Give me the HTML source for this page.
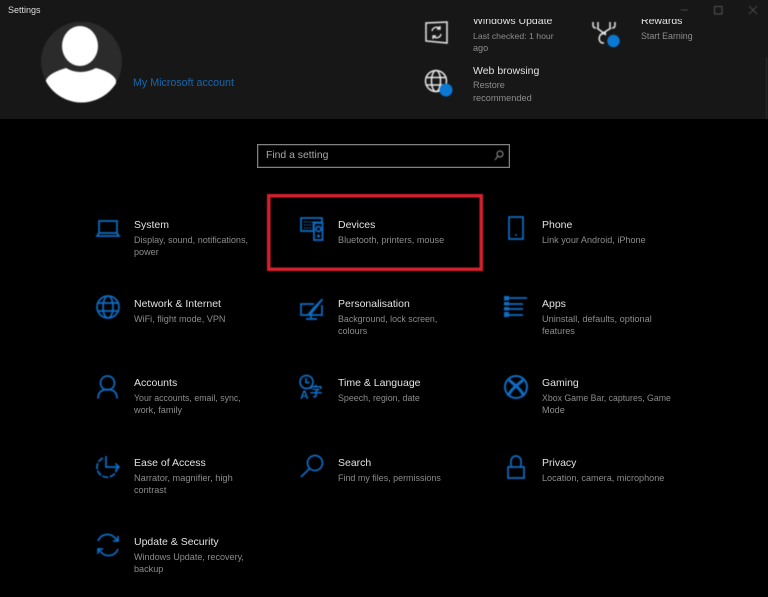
<!DOCTYPE html>
<html><head><meta charset="utf-8"><style>
html,body{margin:0;padding:0;background:#000}
#r{position:relative;width:768px;height:597px;overflow:hidden;background:#000;font-family:"Liberation Sans",sans-serif}
#h{position:absolute;left:0;top:0;width:768px;height:119px;background:#171717}
.t,.d{position:absolute;white-space:nowrap;line-height:14px;filter:blur(.35px)}
.t{font-size:10.5px;color:#e2e2e2}
.d{font-size:9.1px;color:#8c8c8c}
svg{position:absolute;overflow:visible;filter:blur(.4px)}
.b{fill:none;stroke:#0f6cc4;stroke-width:1.7}
.k{fill:none;stroke:#e8e8e8;stroke-width:1.5}
</style></head><body><div id="r">
<div id="h"></div>

<div class="t" style="left:473px;top:14px">Windows Update</div>
<div class="t" style="left:641px;top:14px">Rewards</div>
<div style="position:absolute;left:470px;top:0;width:230px;height:18.500px;background:#171717"></div>

<svg style="left:0;top:0" width="768" height="120">
<clipPath id="a"><path d="M41 22H122V62A40.5 40.5 0 0 1 41 62Z"/></clipPath>
<g clip-path="url(#a)"><circle cx="81.500" cy="62" r="40.500" fill="#2b2b2b"/>
<ellipse cx="80" cy="46" rx="18" ry="20" fill="#fff"/>
<path d="M46 103V80Q49 73 66 68Q80 76 96 68Q112 72 116 80V103Z" fill="#fff"/></g>
<path d="M681 10h7" stroke="#4a4a4a" stroke-width="1"/>
<rect x="714.500" y="6.500" width="7.500" height="7.500" fill="none" stroke="#555"/>
<path d="M749 6l8 8M757 6l-8 8" stroke="#4a4a4a" stroke-width="1"/>
<path d="M426 23L447 22V43L426 41Z" class="k"/>
<path d="M432 31a4.500 4.500 0 0 1 8-2M441 34a4.500 4.500 0 0 1-8 2M440 26v3h-3M433 39v-3h3" fill="none" stroke="#e8e8e8" stroke-width="1.400"/>
<path d="M593 22v3q0 3 3 3M598 22v6M615 22v3q0 3-3 3M610 22v6M597 28l9 7M611 28l-11 7M606 33a6.500 6.500 0 0 0-4 1a5 5 0 0 0 0 9h2" class="k"/>
<circle cx="613.500" cy="41" r="6.200" fill="#0b78d4"/>
<circle cx="436" cy="81" r="10.500" class="k"/><ellipse cx="436" cy="81" rx="4.500" ry="10.500" class="k"/><path d="M426 77.500h20M426 85h20" class="k"/>
<circle cx="446" cy="90" r="6.500" fill="#0b78d4"/>
<path d="M766.500 57V119" stroke="#2e2e2e"/>
</svg>

<div class="t" style="left:8px;top:3px;font-size:9px;color:#ddd">Settings</div>
<div class="t" style="left:133px;top:76px;color:#1766b0;font-size:10.700px">My Microsoft account</div>
<div class="d" style="left:473px;top:29px;font-size:8.700px">Last checked: 1 hour</div>
<div class="d" style="left:473px;top:41px">ago</div>
<div class="d" style="left:641px;top:29px;font-size:8.850px">Start Earning</div>
<div class="t" style="left:473px;top:64px">Web browsing</div>
<div class="d" style="left:473px;top:78px">Restore</div>
<div class="d" style="left:473px;top:91px;font-size:9.200px">recommended</div>

<div style="position:absolute;left:257px;top:144px;width:251px;height:22px;border:1px solid #808080;background:#000;box-shadow:inset 0 0 0 .5px #444"></div>
<div class="d" style="left:266px;top:149px;font-size:10.400px;color:#a8a8a8">Find a setting</div>
<svg style="left:0;top:0" width="768" height="597">
<circle cx="500" cy="154" r="3" fill="none" stroke="#999"/><path d="M498 156l-3 4" stroke="#999"/>
<rect x="268.750" y="195.750" width="212.500" height="73.500" fill="none" stroke="#d6202e" stroke-width="3.500"/>
<!-- System -->
<path class="b" d="M99 221h18v12h-18zM99 233l-2 3h22l-2-3"/>
<!-- Devices -->
<path class="b" d="M301 218h21v4.500h-8.500v8.500h-12.500zM314 223h8.500v17h-8.500z"/><circle cx="318.500" cy="229" r="2.500" class="b"/><circle cx="318.500" cy="236" r="1.500" fill="#0f6cc4"/><path d="M304 222h15M304 225h8M304 228h8" stroke="#0f6cc4" stroke-dasharray="1.500 1"/>
<!-- Phone -->
<rect x="509" y="217" width="14" height="22" class="b"/><path d="M515 235h2" stroke="#0f6cc4" stroke-width="1.500"/>
<!-- Network -->
<circle cx="108" cy="307" r="11" class="b"/><ellipse cx="108" cy="307" rx="5" ry="11" class="b"/><path class="b" d="M98 303h20M98 311h20"/>
<!-- Personalisation -->
<path class="b" d="M314 304h-13v11h21v-10M306 319h11M311 315v4"/><path d="M322 299l-9 9-4 5-1.500 2.500 3-.5 4-5 8-10z" fill="#0f6cc4" stroke="#0f6cc4" stroke-width=".8"/>
<!-- Apps -->
<path d="M504 296h5v4.500h-5zM504 302h5v3.500h-5zM504 307h5v3.500h-5zM504 312h5v5h-5z" fill="#0f6cc4"/><path class="b" d="M509 298h18M509 304h14M509 309h14M509 315h14"/>
<!-- Accounts -->
<circle cx="107.500" cy="383" r="7" class="b"/><path class="b" d="M98 398.500q0-9 9.500-9t9.500 9"/>
<!-- Time & language -->
<circle cx="306.500" cy="382" r="6.500" class="b"/><path class="b" d="M306 378v4.500h3.500"/>
<text x="300" y="399" font-family="Liberation Sans" font-size="12" font-weight="bold" fill="#0f6cc4">A</text>
<text x="309.500" y="396" font-family="Noto Sans CJK SC" font-size="13" font-weight="bold" fill="#0f6cc4">字</text>
<!-- Gaming -->
<circle cx="516" cy="387" r="11" fill="none" stroke="#0f6cc4" stroke-width="2"/><path d="M509 380l7 6 7-6M508 396q3-6 8-10q5 4 8 10" fill="none" stroke="#0f6cc4" stroke-width="3"/>
<!-- Ease -->
<path class="b" d="M103 458a10 10 0 1 0 14 9" stroke-dasharray="6 1.500"/><path class="b" d="M106 456v11h13M115.500 463.500l3.500 3.500-3.500 3.500"/>
<!-- Search -->
<circle cx="315" cy="463" r="7.500" class="b"/><path class="b" d="M309.500 468.500l-8.500 8.500"/>
<!-- Privacy -->
<path class="b" d="M508 467h16v11h-16zM511 467v-6a5 5 0 0 1 10 0v6"/>
<!-- Update -->
<path class="b" d="M98 541a10 10 0 0 1 17-3l3 3M118 536v5h-5M118 549a10 10 0 0 1-17 3l-3-3M98 554v-5h5"/>
</svg>

<div class="t" style="left:134px;top:218px">System</div>
<div class="d" style="left:134px;top:233px;font-size:9.050px">Display, sound, notifications,</div>
<div class="d" style="left:134px;top:245px">power</div>

<div class="t" style="left:338px;top:218px">Devices</div>
<div class="d" style="left:338px;top:233px">Bluetooth, printers, mouse</div>

<div class="t" style="left:542px;top:218px">Phone</div>
<div class="d" style="left:542px;top:233px">Link your Android, iPhone</div>

<div class="t" style="left:134px;top:297px">Network &amp; Internet</div>
<div class="d" style="left:134px;top:312px">WiFi, flight mode, VPN</div>

<div class="t" style="left:338px;top:297px">Personalisation</div>
<div class="d" style="left:338px;top:312px;font-size:8.850px">Background, lock screen,</div>
<div class="d" style="left:338px;top:324px">colours</div>

<div class="t" style="left:542px;top:297px">Apps</div>
<div class="d" style="left:542px;top:312px;font-size:9.200px">Uninstall, defaults, optional</div>
<div class="d" style="left:542px;top:324px">features</div>

<div class="t" style="left:134px;top:376px">Accounts</div>
<div class="d" style="left:134px;top:391px;font-size:8.800px">Your accounts, email, sync,</div>
<div class="d" style="left:134px;top:403px">work, family</div>

<div class="t" style="left:338px;top:376px">Time &amp; Language</div>
<div class="d" style="left:338px;top:391px;font-size:8.870px">Speech, region, date</div>

<div class="t" style="left:542px;top:376px">Gaming</div>
<div class="d" style="left:542px;top:391px;font-size:8.750px">Xbox Game Bar, captures, Game</div>
<div class="d" style="left:542px;top:403px">Mode</div>

<div class="t" style="left:134px;top:456px">Ease of Access</div>
<div class="d" style="left:134px;top:471px;font-size:9.250px">Narrator, magnifier, high</div>
<div class="d" style="left:134px;top:483px">contrast</div>

<div class="t" style="left:338px;top:456px">Search</div>
<div class="d" style="left:338px;top:471px;font-size:8.950px">Find my files, permissions</div>

<div class="t" style="left:542px;top:456px">Privacy</div>
<div class="d" style="left:542px;top:471px">Location, camera, microphone</div>

<div class="t" style="left:134px;top:535px">Update &amp; Security</div>
<div class="d" style="left:134px;top:550px;font-size:9.050px">Windows Update, recovery,</div>
<div class="d" style="left:134px;top:562px">backup</div>
</div></body></html>
